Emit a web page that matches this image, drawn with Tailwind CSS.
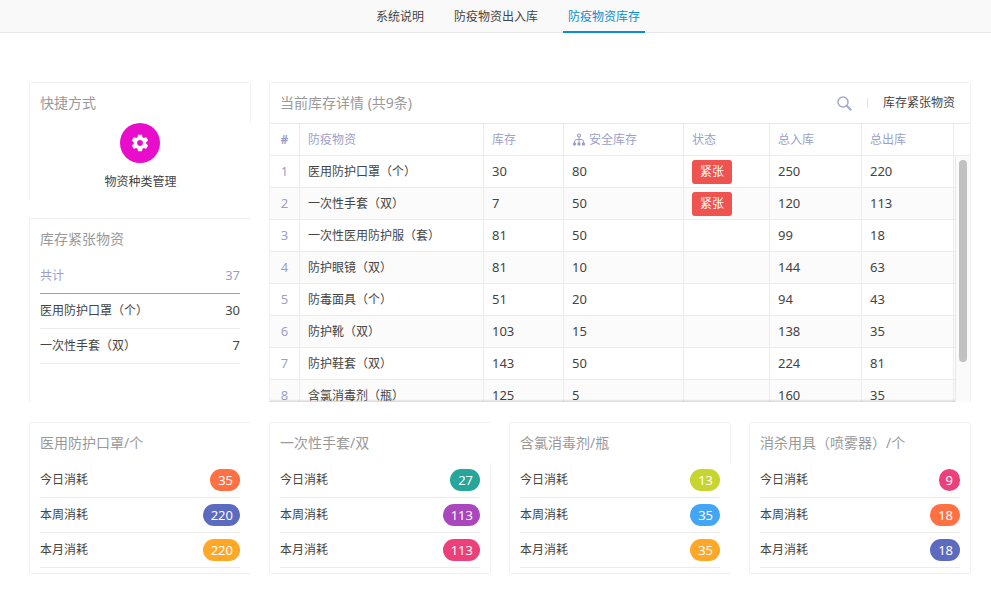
<!DOCTYPE html>
<html lang="zh-CN">
<head>
    <meta charset="UTF-8">
    <meta name="viewport" content="width=device-width, initial-scale=1.0">
    <title>防疫物资库存</title>
    <script src="https://cdn.jsdelivr.net/npm/@tailwindcss/browser@4"></script>
</head>
<body class="bg-white font-['Noto_Sans','Noto_Sans_CJK_SC',sans-serif] text-xs text-[#444]">
    <!-- Top tabs -->
    <nav class="flex h-[33px] justify-center gap-5 border-b border-[#e8e8e8] bg-[#f9f9f9] pl-[25px]">
        <a href="#" class="flex h-[33px] items-center px-[5px]">系统说明</a>
        <a href="#" class="flex h-[33px] items-center px-[5px]">防疫物资出入库</a>
        <a href="#" class="flex h-[33px] items-center border-b-2 border-[#0a8fd2] px-[5px] pt-[2px] text-[#0a8fd2]">防疫物资库存</a>
    </nav>

    <main class="grid grid-cols-4 gap-x-[18px] gap-y-5 pt-[49px] pr-5 pb-4 pl-[29px]">
        <!-- Left column -->
        <div class="flex flex-col gap-[18px]">
            <section>
                <h2 class="flex h-[41px] items-center rounded-t-[2px] border border-b-0 border-[#f0f0f0] px-[10px] text-sm text-[#999]">快捷方式</h2>
                <div class="border-l border-[#f0f0f0] pb-[9px]">
                    <button type="button" class="mx-auto flex flex-col items-center gap-[10px]">
                        <span class="flex size-10 items-center justify-center rounded-full bg-[#e90ccb]">
                            <svg class="size-5" viewBox="0 0 24 24" fill="#fff">
                                <path d="M19.43 12.98c.04-.32.07-.64.07-.98s-.03-.66-.07-.98l2.11-1.65c.19-.15.24-.42.12-.64l-2-3.46c-.12-.22-.39-.3-.61-.22l-2.49 1c-.52-.4-1.08-.73-1.69-.98l-.38-2.65C14.46 2.18 14.25 2 14 2h-4c-.25 0-.46.18-.49.42l-.38 2.65c-.61.25-1.17.59-1.69.98l-2.49-1c-.23-.09-.49 0-.61.22l-2 3.46c-.13.22-.07.49.12.64l2.11 1.65c-.04.32-.07.65-.07.98s.03.66.07.98l-2.11 1.65c-.19.15-.24.42-.12.64l2 3.46c.12.22.39.3.61.22l2.49-1c.52.4 1.08.73 1.69.98l.38 2.65c.03.24.24.42.49.42h4c.25 0 .46-.18.49-.42l.38-2.65c.61-.25 1.17-.59 1.69-.98l2.49 1c.23.09.49 0 .61-.22l2-3.46c.12-.22.07-.49-.12-.64l-2.11-1.65zM12 15.5c-1.93 0-3.5-1.57-3.5-3.5s1.57-3.5 3.5-3.5 3.5 1.57 3.5 3.5-1.57 3.5-3.5 3.5z"/>
                            </svg>
                        </span>
                        <span class="leading-[18px]">物资种类管理</span>
                    </button>
                </div>
            </section>

            <section class="flex flex-1 flex-col border-t border-l border-r border-[#f0f0f0] border-r-transparent">
                <h2 class="flex h-10 items-center px-[10px] text-sm text-[#999]">库存紧张物资</h2>
                <ul class="px-[10px]">
                    <li class="flex h-[35px] items-center justify-between border-b border-[#9c9cb8] text-[#9b9fcb]"><span>共计</span><span class="text-[13px]">37</span></li>
                    <li class="flex h-[35px] items-center justify-between border-b border-[#ececec]"><span>医用防护口罩（个）</span><span class="text-[13px]">30</span></li>
                    <li class="flex h-[35px] items-center justify-between border-b border-[#ececec]"><span>一次性手套（双）</span><span class="text-[13px]">7</span></li>
                </ul>
            </section>
        </div>

        <!-- Stock table -->
        <section class="col-span-3 rounded-t-[2px] border border-b-0 border-[#f0f0f0]">
            <div class="flex h-10 items-center pr-[15px] pl-[10px]">
                <h2 class="text-sm text-[#999]">当前库存详情 (共9条)</h2>
                <button type="button" aria-label="搜索" class="ml-auto">
                    <svg class="size-4" viewBox="0 0 16 16" fill="none" stroke="#a3a9cd">
                        <circle cx="7" cy="7" r="5" stroke-width="1.5"/>
                        <path d="M10.8 10.8l4.4 4.4" stroke-width="2"/>
                    </svg>
                </button>
                <span class="mx-[15px] h-[10px] w-px bg-[#e5e5e5]"></span>
                <button type="button" class="leading-[18px]">库存紧张物资</button>
            </div>
            <div class="relative h-[279px] overflow-hidden border-t border-[#e8e8e8]">
                <table class="w-full table-fixed border-separate border-spacing-0 text-left text-[13px] [&_td]:h-8 [&_td]:border-r [&_td]:border-b [&_td]:border-[#ececec] [&_td]:px-2 [&_td]:py-0 [&_td:first-child]:text-center [&_td:first-child]:text-[#9b9fcb] [&_td:last-child]:border-r-0 [&_td:nth-child(2)]:text-xs [&_th]:h-8 [&_th]:border-r [&_th]:border-b [&_th]:border-[#ececec] [&_th]:px-2 [&_th]:py-0 [&_th:last-child]:border-r-0 [&_tbody_tr:nth-child(even)]:bg-[#fbfbfb]">
                    <colgroup>
                        <col class="w-[30px]">
                        <col>
                        <col class="w-20">
                        <col class="w-[120px]">
                        <col class="w-[86px]">
                        <col class="w-[92px]">
                        <col class="w-[92px]">
                        <col class="w-4">
                    </colgroup>
                    <thead class="text-xs text-[#9b9fcb]">
                        <tr>
                            <th class="text-center font-bold">#</th>
                            <th class="font-normal">防疫物资</th>
                            <th class="font-normal">库存</th>
                            <th class="font-normal">
                                <span class="flex items-center gap-[3px]">
                                    <svg class="size-[14px]" viewBox="0 0 14 14" fill="none" stroke="#9b9fcb">
                                        <circle cx="7" cy="2.5" r="1.5" stroke-width="1.2"/>
                                        <path d="M7 4v7M2.5 10.5V9Q2.5 6.5 5 6.5h4q2.500 0 2.500 2.500v1.500"/>
                                        <g fill="#9b9fcb" stroke="none">
                                            <circle cx="2.5" cy="11" r="1.700"/>
                                            <circle cx="7" cy="11" r="1.700"/>
                                            <circle cx="11.500" cy="11" r="1.700"/>
                                        </g>
                                    </svg>
                                    安全库存
                                </span>
                            </th>
                            <th class="font-normal">状态</th>
                            <th class="font-normal">总入库</th>
                            <th class="font-normal">总出库</th>
                            <th></th>
                        </tr>
                    </thead>
                    <tbody>
                        <tr><td>1</td><td>医用防护口罩（个）</td><td>30</td><td>80</td><td><span class="flex h-6 w-10 items-center justify-center rounded-[3px] bg-[#ef5350] text-xs text-white">紧张</span></td><td>250</td><td>220</td><td></td></tr>
                        <tr><td>2</td><td>一次性手套（双）</td><td>7</td><td>50</td><td><span class="flex h-6 w-10 items-center justify-center rounded-[3px] bg-[#ef5350] text-xs text-white">紧张</span></td><td>120</td><td>113</td><td></td></tr>
                        <tr><td>3</td><td>一次性医用防护服（套）</td><td>81</td><td>50</td><td></td><td>99</td><td>18</td><td></td></tr>
                        <tr><td>4</td><td>防护眼镜（双）</td><td>81</td><td>10</td><td></td><td>144</td><td>63</td><td></td></tr>
                        <tr><td>5</td><td>防毒面具（个）</td><td>51</td><td>20</td><td></td><td>94</td><td>43</td><td></td></tr>
                        <tr><td>6</td><td>防护靴（双）</td><td>103</td><td>15</td><td></td><td>138</td><td>35</td><td></td></tr>
                        <tr><td>7</td><td>防护鞋套（双）</td><td>143</td><td>50</td><td></td><td>224</td><td>81</td><td></td></tr>
                        <tr><td>8</td><td>含氯消毒剂（瓶）</td><td>125</td><td>5</td><td></td><td>160</td><td>35</td><td></td></tr>
                    </tbody>
                </table>
                <div class="absolute right-[15px] bottom-0 left-0 h-[3px] bg-linear-to-b from-transparent to-black/15"></div>
                <!-- Scrollbar -->
                <div class="absolute top-8 right-0 bottom-0 w-[15px] border-l border-[#e8e8e8] bg-[#fafafa] pt-1 pl-[3px]">
                    <div class="h-[202px] w-2 rounded-full bg-[#c1c1c1]"></div>
                </div>
            </div>
        </section>

        <!-- Consumption cards -->
        <section class="rounded-[2px] border border-[#f0f0f0] border-r-transparent pb-[5px]">
            <h2 class="flex h-10 items-center px-[10px] text-sm text-[#999]">医用防护口罩/个</h2>
            <ul class="px-[10px]">
                <li class="flex h-[35px] items-center justify-between border-b border-[#ececec]"><span>今日消耗</span><span class="h-[22px] rounded-full bg-[#ff7043] pr-[7px] pl-2 text-center text-[13px] leading-[22px] text-white">35</span></li>
                <li class="flex h-[35px] items-center justify-between border-b border-[#ececec]"><span>本周消耗</span><span class="h-[22px] rounded-full bg-[#5c6bc0] pr-[7px] pl-2 text-center text-[13px] leading-[22px] text-white">220</span></li>
                <li class="flex h-[35px] items-center justify-between border-b border-[#ececec]"><span>本月消耗</span><span class="h-[22px] rounded-full bg-[#ffa726] pr-[7px] pl-2 text-center text-[13px] leading-[22px] text-white">220</span></li>
            </ul>
        </section>

        <section>
            <h2 class="flex h-[41px] items-center rounded-tl-[2px] border border-b-0 border-[#f0f0f0] border-r-transparent px-[10px] text-sm text-[#999]">一次性手套/双</h2>
            <ul class="rounded-b-[2px] border border-t-0 border-[#f0f0f0] px-[10px] pb-[5px]">
                <li class="flex h-[35px] items-center justify-between border-b border-[#ececec]"><span>今日消耗</span><span class="h-[22px] rounded-full bg-[#26a69a] pr-[7px] pl-2 text-center text-[13px] leading-[22px] text-white">27</span></li>
                <li class="flex h-[35px] items-center justify-between border-b border-[#ececec]"><span>本周消耗</span><span class="h-[22px] rounded-full bg-[#ab47bc] pr-[7px] pl-2 text-center text-[13px] leading-[22px] text-white">113</span></li>
                <li class="flex h-[35px] items-center justify-between border-b border-[#ececec]"><span>本月消耗</span><span class="h-[22px] rounded-full bg-[#ec407a] pr-[7px] pl-2 text-center text-[13px] leading-[22px] text-white">113</span></li>
            </ul>
        </section>

        <section>
            <h2 class="flex h-[41px] items-center rounded-t-[2px] border border-b-0 border-[#f0f0f0] px-[10px] text-sm text-[#999]">含氯消毒剂/瓶</h2>
            <ul class="rounded-bl-[2px] border border-t-0 border-[#f0f0f0] border-r-transparent px-[10px] pb-[5px]">
                <li class="flex h-[35px] items-center justify-between border-b border-[#ececec]"><span>今日消耗</span><span class="h-[22px] rounded-full bg-[#c6d530] pr-[7px] pl-2 text-center text-[13px] leading-[22px] text-white">13</span></li>
                <li class="flex h-[35px] items-center justify-between border-b border-[#ececec]"><span>本周消耗</span><span class="h-[22px] rounded-full bg-[#42a5f5] pr-[7px] pl-2 text-center text-[13px] leading-[22px] text-white">35</span></li>
                <li class="flex h-[35px] items-center justify-between border-b border-[#ececec]"><span>本月消耗</span><span class="h-[22px] rounded-full bg-[#ffa726] pr-[7px] pl-2 text-center text-[13px] leading-[22px] text-white">35</span></li>
            </ul>
        </section>

        <section class="rounded-[2px] border border-[#f0f0f0] pb-[5px]">
            <h2 class="flex h-10 items-center px-[10px] text-sm text-[#999]">消杀用具（喷雾器）/个</h2>
            <ul class="px-[10px]">
                <li class="flex h-[35px] items-center justify-between border-b border-[#ececec]"><span>今日消耗</span><span class="h-[22px] rounded-full bg-[#ec407a] px-[7px] text-center text-[13px] leading-[22px] text-white">9</span></li>
                <li class="flex h-[35px] items-center justify-between border-b border-[#ececec]"><span>本周消耗</span><span class="h-[22px] rounded-full bg-[#ff7043] pr-[7px] pl-2 text-center text-[13px] leading-[22px] text-white">18</span></li>
                <li class="flex h-[35px] items-center justify-between border-b border-[#ececec]"><span>本月消耗</span><span class="h-[22px] rounded-full bg-[#5c6bc0] pr-[7px] pl-2 text-center text-[13px] leading-[22px] text-white">18</span></li>
            </ul>
        </section>
    </main>
</body>
</html>
